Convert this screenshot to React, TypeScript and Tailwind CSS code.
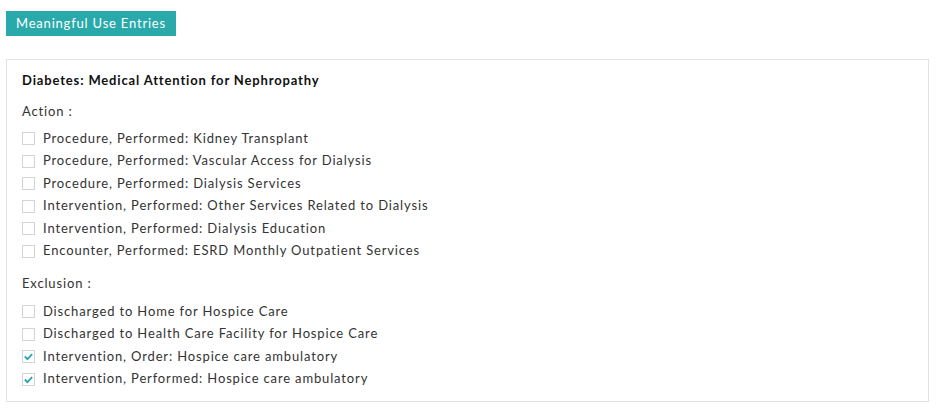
import React from 'react';

const actions = [
  { label: 'Procedure, Performed: Kidney Transplant', checked: false },
  { label: 'Procedure, Performed: Vascular Access for Dialysis', checked: false },
  { label: 'Procedure, Performed: Dialysis Services', checked: false },
  { label: 'Intervention, Performed: Other Services Related to Dialysis', checked: false },
  { label: 'Intervention, Performed: Dialysis Education', checked: false },
  { label: 'Encounter, Performed: ESRD Monthly Outpatient Services', checked: false },
];

const exclusions = [
  { label: 'Discharged to Home for Hospice Care', checked: false },
  { label: 'Discharged to Health Care Facility for Hospice Care', checked: false },
  { label: 'Intervention, Order: Hospice care ambulatory', checked: true },
  { label: 'Intervention, Performed: Hospice care ambulatory', checked: true },
];

function Check({ label, checked }: { label: string; checked: boolean }) {
  return (
    <label className="flex h-[22.5px] items-center">
      <span className="flex h-[13px] w-[13px] shrink-0 items-center justify-center border border-[#d4d4d4] bg-white">
        {checked && (
          <svg viewBox="0 0 12 12" className="h-[11px] w-[11px]">
            <path d="M2 6 L4.8 8.8 L10 3.4" fill="none" stroke="#2aa3b8" strokeWidth="2" />
          </svg>
        )}
      </span>
      <span className="ml-[8px] text-[13px] tracking-[0.85px] text-[#333]">{label}</span>
    </label>
  );
}

export default function App() {
  return (
    <div className="min-h-screen bg-white px-[6px] pt-[10px] font-['Lato',sans-serif]">
      {/* Header button */}
      <button className="h-[25px] bg-[#2aa9ab] px-[10px] text-[13px] tracking-[0.8px] text-white">
        Meaningful Use Entries
      </button>

      {/* Measure panel */}
      <div className="mt-[23px] w-[923px] border border-[#e2e2e2] px-[15px] pb-[11px] pt-[11px]">
        <h3 className="text-[13px] font-bold leading-[18px] tracking-[0.85px] text-[#111]">
          Diabetes: Medical Attention for Nephropathy
        </h3>

        <p className="mt-[13px] text-[13px] leading-[18px] tracking-[0.85px] text-[#333]">Action :</p>
        <div className="mt-[7px]">
          {actions.map((a) => (
            <Check key={a.label} {...a} />
          ))}
        </div>

        <p className="mt-[12px] text-[13px] leading-[18px] tracking-[0.85px] text-[#333]">Exclusion :</p>
        <div className="mt-[8px]">
          {exclusions.map((a) => (
            <Check key={a.label} {...a} />
          ))}
        </div>
      </div>
    </div>
  );
}
